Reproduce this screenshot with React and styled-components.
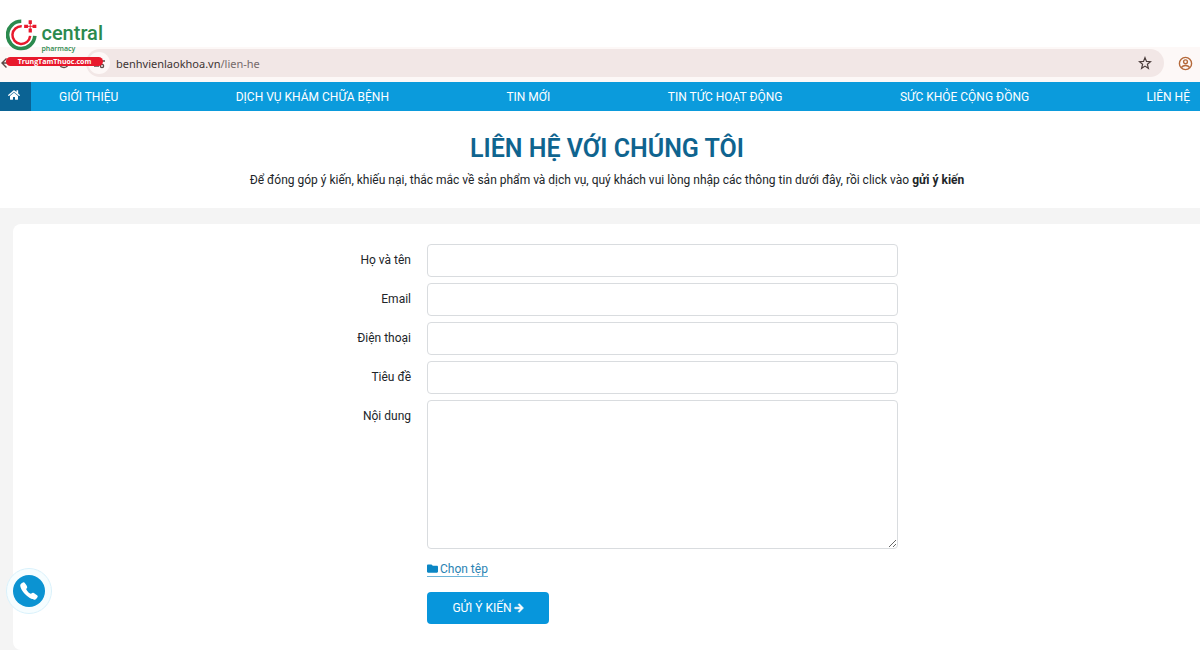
import React from "react";
import styled, { createGlobalStyle } from "styled-components";
import { FaHome, FaFolder, FaArrowRight } from "react-icons/fa";
import { IoCall } from "react-icons/io5";

const GlobalStyle = createGlobalStyle`
  * {
    box-sizing: border-box;
  }
  body {
    margin: 0;
    background-color: #fff;
    color: #212529;
    font-family: Roboto, sans-serif;
    font-size: 12px;
    line-height: 18px;
  }
`

const Page = styled.div`
  position: relative;
  padding-top: 47px;
`

const BrowserBar = styled.div`
  display: flex;
  align-items: center;
  height: 35px;
  padding: 0 7px 3px 0;
  background-color: #fdf8f7;
`

const BrowserIcons = styled.div`
  display: flex;
  align-items: center;
  gap: 44px;
  width: 86px;
  color: #5c4b48;
`

const AddressBar = styled.div`
  flex: 1;
  display: flex;
  align-items: center;
  height: 28px;
  padding: 0 12px 0 2px;
  border-radius: 14px;
  background-color: #f2e7e6;
`

const SiteInfo = styled.span`
  display: flex;
  align-items: center;
  justify-content: center;
  width: 22px;
  height: 22px;
  margin-right: 6px;
  border-radius: 50%;
  background-color: #fdf8f7;
  color: #5c4b48;
`

const Url = styled.div`
  flex: 1;
  padding-top: 1px;
  font-family: "Noto Sans", sans-serif;
  font-size: 11px;
  color: #3d3433;
`

const UrlPath = styled.span`
  color: #75696a;
`

const Profile = styled.span`
  display: flex;
  margin-left: 14px;
  color: #b5693a;
`

const Brand = styled.div`
  position: absolute;
  top: 17px;
  left: 6px;
  width: 97px;
`

const BrandRow = styled.div`
  display: flex;
  height: 40px;
`

const BrandText = styled.div`
  display: flex;
  flex-direction: column;
  margin-left: 3px;
  padding-top: 4px;
  color: #2b8a4e;
`

const BrandName = styled.span`
  font-size: 20px;
  font-weight: 500;
  line-height: 24px;
`

const BrandSub = styled.span`
  font-family: "Open Sans", sans-serif;
  font-size: 7px;
  font-weight: 600;
  line-height: 8px;
`

const BrandRibbon = styled.div`
  height: 9px;
  border-radius: 5px;
  background-color: #e8192c;
  color: #fff;
  font-family: "Open Sans", sans-serif;
  font-size: 7px;
  font-weight: bold;
  line-height: 9px;
  text-align: center;
`

const Nav = styled.nav`
  display: flex;
  height: 29px;
  background-color: #0b9bdc;
`

const HomeLink = styled.a`
  display: flex;
  align-items: center;
  justify-content: center;
  width: 31px;
  padding: 0 3px 4px 0;
  background-color: #0b6394;
  color: #fff;
`

const NavList = styled.div`
  flex: 1;
  display: flex;
  align-items: center;
  justify-content: space-between;
  padding: 0 10px 0 28px;
`

const NavLink = styled.a`
  color: #fff;
  text-decoration: none;
  white-space: nowrap;
`

const Intro = styled.header`
  height: 97px;
  padding: 22px 0 0 14px;
  text-align: center;
`

const Title = styled.h1`
  margin: 0 0 6px;
  font-size: 25px;
  font-weight: 600;
  line-height: 32px;
  color: #0f648f;
`

const IntroText = styled.p`
  margin: 0;
`

const Content = styled.main`
  padding: 16px 0 0 13px;
  background-color: #f4f4f4;
`

const Form = styled.form`
  display: grid;
  grid-template-columns: 398fr 471fr 286fr;
  gap: 6px 16px;
  padding: 20px 0 26px;
  border-radius: 8px 0 0 8px;
  background-color: #fff;
`

const Label = styled.label`
  grid-column: 1;
  padding-top: 7px;
  text-align: right;
`

const Input = styled.input`
  grid-column: 2;
  width: 100%;
  height: 33px;
  padding: 6px 12px;
  border: 1px solid #d9dcdf;
  border-radius: 4px;
  font: inherit;
  &:focus {
    outline: none;
    border-color: #0b9bdc;
  }
`

const TextArea = styled(Input)`
  display: block;
  height: 149px;
  resize: vertical;
`

const Actions = styled.div`
  grid-column: 2;
  display: flex;
  flex-direction: column;
  align-items: flex-start;
  gap: 15px;
  padding-top: 6px;
`

const FileLink = styled.a`
  display: flex;
  align-items: center;
  gap: 2px;
  height: 16px;
  border-bottom: 1px solid #6db4d8;
  color: #2a83b3;
  text-decoration: none;
  svg {
    color: #0b86c4;
  }
`

const SubmitButton = styled.button`
  display: flex;
  align-items: center;
  justify-content: center;
  gap: 2px;
  width: 122px;
  height: 32px;
  border: none;
  border-radius: 4px;
  background-color: #0796dc;
  color: #fff;
  font: inherit;
  cursor: pointer;
`

const CallButton = styled.a`
  position: fixed;
  left: 6px;
  bottom: 36px;
  display: flex;
  align-items: center;
  justify-content: center;
  width: 46px;
  height: 46px;
  border: 1px solid #d9f1fb;
  border-radius: 50%;
  background-color: #f6fdff;
`

const CallCircle = styled.span`
  display: flex;
  align-items: center;
  justify-content: center;
  width: 32px;
  height: 32px;
  border-radius: 50%;
  background-color: #0b93d2;
  color: #fff;
`

const menu = [
  "GIỚI THIỆU",
  "DỊCH VỤ KHÁM CHỮA BỆNH",
  "TIN MỚI",
  "TIN TỨC HOẠT ĐỘNG",
  "SỨC KHỎE CỘNG ĐỒNG",
  "LIÊN HỆ",
];

const fields = [
  { id: "name", label: "Họ và tên", type: "text" },
  { id: "email", label: "Email", type: "email" },
  { id: "phone", label: "Điện thoại", type: "tel" },
  { id: "subject", label: "Tiêu đề", type: "text" },
];

const BrandMark = () => (
  <svg width="34" height="36" viewBox="0 0 34 36" fill="none">
    <path d="M16 3.6A14.3 14.3 0 1 0 30.2 19" stroke="#2b8a4e" strokeWidth="3.8" />
    <path d="M16.5 8.8A9.3 9.3 0 1 0 25.3 19" stroke="#e8192c" strokeWidth="2.6" />
    <path
      d="M25.4 2.5v4M25.4 11.3v4M19 8.9h4M27.8 8.9h4"
      stroke="#e8192c"
      strokeWidth="3.4"
    />
    <path d="M25.4 6v5.8M22.5 8.9h5.8" stroke="#e8192c" strokeWidth="1" />
  </svg>
);

function App() {
  return (
    <>
      <GlobalStyle />
      <Page>
        <BrowserBar>
          <BrowserIcons>
            <svg width="14" height="14" viewBox="0 0 14 14" fill="none" stroke="currentColor" strokeWidth="1.4">
              <path d="M6.5 2.5L2 7l4.500 4.500M2 7h11" />
            </svg>
            <svg width="12" height="12" viewBox="0 0 12 12" fill="none" stroke="currentColor" strokeWidth="1.4">
              <path d="M10.500 6A4.500 4.500 0 1 1 9 2.700M10.500 1v3h-3" />
            </svg>
          </BrowserIcons>
          <AddressBar>
            <SiteInfo>
              <svg width="11" height="11" viewBox="0 0 11 11" fill="none" stroke="currentColor" strokeWidth="1.4">
                <circle cx="3" cy="3" r="1.6" />
                <path d="M5.5 3H11M0 8h5" />
                <circle cx="8" cy="8" r="1.6" />
              </svg>
            </SiteInfo>
            <Url>
              benhvienlaokhoa.vn<UrlPath>/lien-he</UrlPath>
            </Url>
            <svg width="14" height="14" viewBox="0 0 14 14" fill="none" stroke="#4b3d3b" strokeWidth="1.2">
              <path d="M7 1.6l1.5 3.8 4.1.3-3.2 2.6 1 4L7 10.1l-3.4 2.2 1-4L1.4 5.7l4.1-.3z" />
            </svg>
          </AddressBar>
          <Profile>
            <svg width="15" height="15" viewBox="0 0 15 15" fill="none" stroke="currentColor" strokeWidth="1.4">
              <circle cx="7.5" cy="7.5" r="6.1" />
              <circle cx="7.5" cy="5.8" r="1.9" />
              <path d="M3.3 11.5c1.2-1.5 2.6-2 4.2-2s3 .5 4.2 2" />
            </svg>
          </Profile>
        </BrowserBar>

        <Brand>
          <BrandRow>
            <BrandMark />
            <BrandText>
              <BrandName>central</BrandName>
              <BrandSub>pharmacy</BrandSub>
            </BrandText>
          </BrandRow>
          <BrandRibbon>TrungTamThuoc.com</BrandRibbon>
        </Brand>

        <Nav>
          <HomeLink href="#" aria-label="Trang chủ">
            <FaHome size={12} />
          </HomeLink>
          <NavList>
            {menu.map((item) => (
              <NavLink href="#" key={item}>{item}</NavLink>
            ))}
          </NavList>
        </Nav>

        <Intro>
          <Title>LIÊN HỆ VỚI CHÚNG TÔI</Title>
          <IntroText>
            Để đóng góp ý kiến, khiếu nại, thắc mắc về sản phẩm và dịch vụ, quý khách vui lòng nhập các
            thông tin dưới đây, rồi click vào <b>gửi ý kiến</b>
          </IntroText>
        </Intro>

        <Content>
          <Form onSubmit={(e) => e.preventDefault()}>
            {fields.map((field) => (
              <React.Fragment key={field.id}>
                <Label htmlFor={field.id}>{field.label}</Label>
                <Input id={field.id} name={field.id} type={field.type} />
              </React.Fragment>
            ))}
            <Label htmlFor="message">Nội dung</Label>
            <TextArea as="textarea" id="message" name="message" />
            <Actions>
              <FileLink href="#">
                <FaFolder size={11} />
                Chọn tệp
              </FileLink>
              <SubmitButton type="submit">
                GỬI Ý KIẾN
                <FaArrowRight size={10} stroke="currentColor" strokeWidth={30} />
              </SubmitButton>
            </Actions>
          </Form>
        </Content>

        <CallButton href="tel:" aria-label="Gọi điện">
          <CallCircle>
            <IoCall size={20} />
          </CallCircle>
        </CallButton>
      </Page>
    </>
  );
}

export default App;
